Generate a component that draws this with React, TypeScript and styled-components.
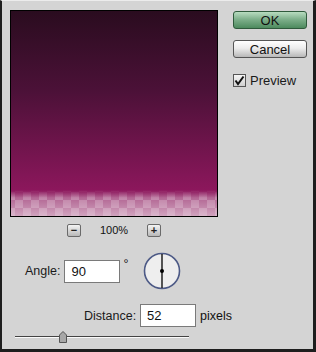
import React from 'react';
import styled, { createGlobalStyle } from 'styled-components';

const GlobalStyle = createGlobalStyle`
  html, body {
    margin: 0;
    padding: 0;
    background: #d4d4d4;
  }
  * {
    box-sizing: border-box;
  }
`;

const Dialog = styled.div`
  position: relative;
  width: 316px;
  height: 352px;
  display: flex;
  background: #d4d4d4;
  border-left: 2px solid #1e1e1e;
  border-right: 3px solid #1e1e1e;
  border-bottom: 3px solid #1e1e1e;
  border-top: 1px solid #ececec;
  font-family: 'Liberation Sans', Arial, sans-serif;
  font-size: 12px;
  color: #111;
`;

const LeftColumn = styled.div`
  width: 223px;
  flex-shrink: 0;
  padding: 9px 0 0 8px;
  display: flex;
  flex-direction: column;
`;

const RightColumn = styled.div`
  padding: 10px 0 0 8px;
  display: flex;
  flex-direction: column;
`;

const Preview = styled.div`
  width: 208px;
  height: 207px;
  border: 1px solid #000;
  display: flex;
  flex-direction: column;
`;

const Gradient = styled.div`
  flex: 1;
  background: linear-gradient(#2a0c1f 0%, #4c1138 45%, #8c175c 100%);
`;

const Transparency = styled.div`
  height: 26px;
  background-color: #8c1a5e;
  background-image:
    linear-gradient(#8c175c 0%, rgba(140, 23, 92, 0) 30%),
    conic-gradient(rgba(255, 255, 255, 0.2) 25%, transparent 0 50%, rgba(255, 255, 255, 0.2) 0 75%, transparent 0),
    linear-gradient(rgba(255, 255, 255, 0.22), rgba(255, 255, 255, 0.6));
  background-size: 100% 100%, 16px 16px, 100% 100%;
  background-position: 0 0, 4px 2px, 0 0;
`;

const ZoomRow = styled.div`
  display: flex;
  align-items: center;
  margin: 6px 0 0 57px;
  height: 14px;
`;

const ZoomButton = styled.div`
  width: 14px;
  height: 13px;
  border: 1px solid #6a6a6a;
  border-radius: 2px;
  background: linear-gradient(#f4f4f4, #b8b8b8);
  display: flex;
  align-items: center;
  justify-content: center;
  font-size: 11px;
  font-weight: bold;
  line-height: 1;
  color: #222;
`;

const ZoomLabel = styled.span`
  width: 66px;
  text-align: center;
  font-size: 11px;
  color: #111;
`;

const FieldRow = styled.div<{ $indent: number; $top: number }>`
  display: flex;
  align-items: center;
  margin-top: ${({ $top }) => $top}px;
  padding-left: ${({ $indent }) => $indent}px;
  white-space: nowrap;
`;

const Label = styled.span`
  font-size: 12.5px;
  margin-right: 4px;
  color: #1a1a1a;
`;

const Input = styled.div`
  flex-shrink: 0;
  width: 56px;
  height: 23px;
  background: #fff;
  border: 1px solid #7a7a7a;
  display: flex;
  align-items: center;
  padding-left: 6px;
  font-size: 13px;
`;

const Unit = styled.span<{ $raise?: boolean }>`
  flex-shrink: 0;
  margin-left: ${({ $raise }) => ($raise ? 3 : 4)}px;
  font-size: 12.5px;
  align-self: ${({ $raise }) => ($raise ? 'flex-start' : 'center')};
  margin-top: ${({ $raise }) => ($raise ? 5 : 0)}px;
`;

const Dial = styled.svg`
  flex-shrink: 0;
  margin-left: 15px;
`;

const SliderRow = styled.div`
  position: relative;
  margin: 4px 0 0 5px;
  width: 174px;
  height: 12px;
`;

const Track = styled.div`
  position: absolute;
  left: 0;
  right: 0;
  top: 5px;
  height: 2px;
  border-top: 1px solid #444;
  border-bottom: 1px solid #fafafa;
`;

const Thumb = styled.svg`
  position: absolute;
  top: 0;
`;

const Button = styled.div<{ $primary?: boolean }>`
  width: 74px;
  height: 18px;
  border-radius: 3px;
  display: flex;
  align-items: center;
  justify-content: center;
  font-size: 13px;
  color: #111;
  margin-bottom: 11px;
  border: 1px solid ${({ $primary }) => ($primary ? '#2f5a3c' : '#555')};
  background: ${({ $primary }) =>
    $primary
      ? 'linear-gradient(#b8dcc0 0%, #7fb08c 45%, #4d8a5e 100%)'
      : 'linear-gradient(#ffffff 0%, #ececec 45%, #b8b8b8 100%)'};
`;

const CheckRow = styled.label`
  display: flex;
  align-items: center;
  margin-top: 4px;
  font-size: 13px;
  color: #1a1a1a;
`;

const Box = styled.span`
  width: 13px;
  height: 13px;
  border: 1px solid #555;
  background: linear-gradient(#f6f6f6, #cfcfcf);
  display: flex;
  align-items: center;
  justify-content: center;
  margin-right: 4px;
`;

export default function App() {
  const distance = 52;
  const thumbLeft = 44;

  return (
    <>
      <GlobalStyle />
      <Dialog>
        <LeftColumn>
          <Preview>
            <Gradient />
            <Transparency />
          </Preview>

          <ZoomRow>
            <ZoomButton>−</ZoomButton>
            <ZoomLabel>100%</ZoomLabel>
            <ZoomButton>+</ZoomButton>
          </ZoomRow>

          <FieldRow $indent={15} $top={15}>
            <Label>Angle:</Label>
            <Input>90</Input>
            <Unit $raise>°</Unit>
            <Dial width="38" height="38" viewBox="0 0 38 38">
              <circle cx="19" cy="19" r="17.5" fill="#eeeeee" stroke="#4d5a86" strokeWidth="1.6" />
              <line x1="19" y1="2" x2="19" y2="36" stroke="#000" strokeWidth="1.3" />
              <circle cx="19" cy="19" r="2" fill="#000" />
            </Dial>
          </FieldRow>

          <FieldRow $indent={74} $top={14}>
            <Label>Distance:</Label>
            <Input>{distance}</Input>
            <Unit>pixels</Unit>
          </FieldRow>

          <SliderRow>
            <Track />
            <Thumb style={{ left: thumbLeft }} width="8" height="12" viewBox="0 0 8 12">
              <path d="M0.5 11.5 V4 L4 0.5 L7.5 4 V11.5 Z" fill="#a8a8a8" stroke="#555" strokeWidth="1" />
            </Thumb>
          </SliderRow>
        </LeftColumn>

        <RightColumn>
          <Button $primary>OK</Button>
          <Button>Cancel</Button>
          <CheckRow>
            <Box>
              <svg width="11" height="11" viewBox="0 0 11 11">
                <path d="M1.5 5.5 L4 9 L9.5 1.5" fill="none" stroke="#111" strokeWidth="2" />
              </svg>
            </Box>
            Preview
          </CheckRow>
        </RightColumn>
      </Dialog>
    </>
  );
}
